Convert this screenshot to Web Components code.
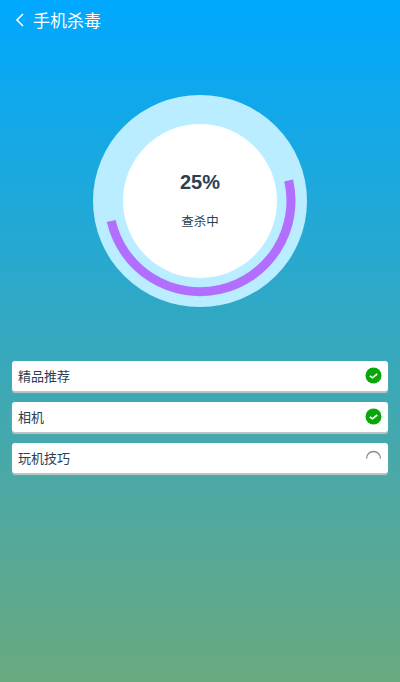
<!DOCTYPE html>
<html lang="zh">
<head>
<meta charset="utf-8">
<title>手机杀毒</title>
<style>
    html, body { margin: 0; height: 100%; }
    body {
        width: 400px;
        height: 682px;
        overflow: hidden;
        background: linear-gradient(180deg, #00a8ff 0%, #6aa97f 100%);
        font-family: "Noto Sans CJK SC", "Liberation Sans", sans-serif;
    }
</style>
</head>
<body>
<virus-scan-page>
    <scan-header>手机杀毒</scan-header>
    <scan-dial percent="25" label="查杀中"></scan-dial>
    <scan-list>
        <scan-row status="done">精品推荐</scan-row>
        <scan-row status="done">相机</scan-row>
        <scan-row status="busy">玩机技巧</scan-row>
    </scan-list>
</virus-scan-page>

<script>
class VirusScanPage extends HTMLElement {
    connectedCallback() {
        this.attachShadow({ mode: 'open' });
        this.shadowRoot.innerHTML = `
        <style>
            :host {
                display: flex;
                flex-direction: column;
                height: 100%;
            }
        </style>
        <slot></slot>
        `;
    }
}

class ScanHeader extends HTMLElement {
    connectedCallback() {
        this.attachShadow({ mode: 'open' });
        this.shadowRoot.innerHTML = `
        <style>
            :host {
                display: flex;
                align-items: center;
                box-sizing: border-box;
                height: 40px;
                padding: 0 0 1px 14px;
                color: #fff;
                font-size: 17px;
            }
            svg { margin-right: 8px; }
        </style>
        <svg width="11" height="16" viewBox="0 0 11 16">
            <path d="M9 2 L3 8 L9 14" fill="none" stroke="#fff" stroke-width="1.6"/>
        </svg>
        <slot></slot>
        `;
    }
}

class ScanDial extends HTMLElement {
    connectedCallback() {
        this.attachShadow({ mode: 'open' });
        this.shadowRoot.innerHTML = `
        <style>
            :host {
                display: block;
                width: 214px;
                height: 212px;
                margin: 55px auto 0;
                position: relative;
                border-radius: 50%;
                background: #b9edff;
            }
            .face {
                box-sizing: border-box;
                width: 154px;
                height: 154px;
                margin: 0 auto;
                position: relative;
                top: 29px;
                border-radius: 50%;
                background: #fff;
                display: flex;
                flex-direction: column;
                align-items: center;
                color: #2c3e50;
            }
            .num {
                margin-top: 43px;
                font: bold 20px/30px "Liberation Sans", sans-serif;
            }
            .label {
                margin-top: 14px;
                font-size: 12.5px;
                line-height: 20px;
            }
            svg {
                position: absolute;
                left: 0;
                top: -1px;
            }
        </style>
        <div class="face">
            <div class="num">${this.getAttribute('percent')}%</div>
            <div class="label">${this.getAttribute('label')}</div>
        </div>
        <svg width="214" height="214" viewBox="0 0 214 214">
            <path d="M195.7 86.4 A91 91 0 0 1 18.2 127" fill="none" stroke="#b26eff" stroke-width="9"/>
        </svg>
        `;
    }
}

class ScanList extends HTMLElement {
    connectedCallback() {
        this.attachShadow({ mode: 'open' });
        this.shadowRoot.innerHTML = `
        <style>
            :host {
                display: flex;
                flex-direction: column;
                gap: 9px;
                margin: 54px 12px 0;
            }
        </style>
        <slot></slot>
        `;
    }
}

class ScanRow extends HTMLElement {
    connectedCallback() {
        const done = this.getAttribute('status') === 'done';
        this.attachShadow({ mode: 'open' });
        this.shadowRoot.innerHTML = `
        <style>
            :host {
                display: flex;
                align-items: center;
                justify-content: space-between;
                box-sizing: border-box;
                height: 30px;
                margin-bottom: 2px;
                padding: 0 6px 1px;
                background: #fff;
                border-radius: 3px;
                box-shadow: 0 2px 1px #bfc4c4;
                color: #2c3e50;
                font-size: 13px;
            }
        </style>
        <slot></slot>
        ${done ? `
        <svg width="17" height="17" viewBox="0 0 17 17">
            <circle cx="8.5" cy="8.5" r="8" fill="#0aa70a"/>
            <path d="M4.8 8.8 L7.4 10.8 L12.2 7" fill="none" stroke="#fff" stroke-width="1.6"/>
        </svg>` : `
        <svg width="17" height="17" viewBox="0 0 17 17">
            <path d="M1.5 9.5 A7 7 0 0 1 15.5 9.5" fill="none" stroke="#8d8d8d" stroke-width="1.3"/>
        </svg>`}
        `;
    }
}

customElements.define('virus-scan-page', VirusScanPage);
customElements.define('scan-header', ScanHeader);
customElements.define('scan-dial', ScanDial);
customElements.define('scan-list', ScanList);
customElements.define('scan-row', ScanRow);
</script>
</body>
</html>
